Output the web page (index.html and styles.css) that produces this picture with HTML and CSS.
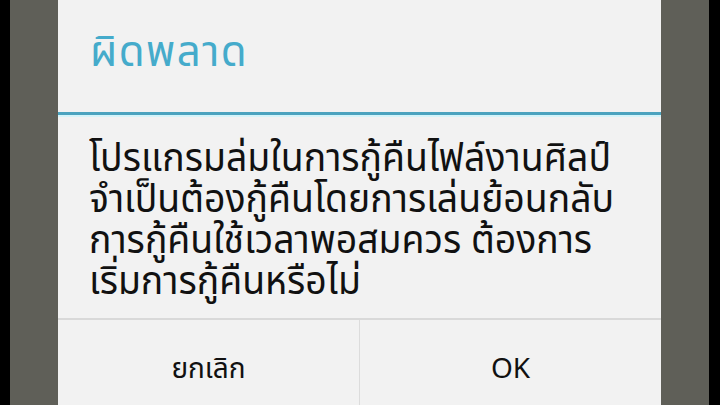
FILE: index.html
```html
<!DOCTYPE html>
<html lang="th">
<head>
<meta charset="UTF-8" />
<meta name="viewport" content="width=device-width, initial-scale=1" />
<title>ผิดพลาด</title>
<link rel="stylesheet" href="styles.css">
</head>
<body>
<div class="screen">
    <div class="shade"></div>
    <div class="dialog">
        <div class="dialog-title">ผิดพลาด</div>
        <div class="dialog-body">
            <span class="line">โปรแกรมล่มในการกู้คืนไฟล์งานศิลป์</span>
            <span class="line">จำเป็นต้องกู้คืนโดยการเล่นย้อนกลับ</span>
            <span class="line">การกู้คืนใช้เวลาพอสมควร ต้องการ</span>
            <span class="line">เริ่มการกู้คืนหรือไม่</span>
        </div>
        <div class="dialog-buttons">
            <button class="btn">ยกเลิก</button>
            <button class="btn">OK</button>
        </div>
    </div>
    <div class="shade"></div>
</div>
</body>
</html>
```

FILE: styles.css
```css
body {
    margin: 0;
    background: #000;
    font-family: "Noto Sans Thai", "Noto Sans", "DejaVu Sans", sans-serif;
    overflow: hidden;
}
.screen {
    display: flex;
    height: 405px;
    padding: 0 10px;
}
.shade {
    width: 48px;
    background: #5f5f58;
}
.dialog {
    width: 603px;
    background: #f2f2f2;
    display: flex;
    flex-direction: column;
}
.dialog-title {
    height: 115px;
    box-sizing: border-box;
    padding: 25px 0 0 32px;
    font-size: 42px;
    line-height: 56px;
    letter-spacing: 1.5px;
    color: #45abcb;
    border-bottom: 3px solid #4ba3bf;
    box-shadow: 0 2px 0 #d4f4fa;
}
.dialog-body {
    padding: 24px 0 0 31px;
    height: 205px;
    box-sizing: border-box;
    border-bottom: 2px solid #d9d9d9;
    overflow: hidden;
}
.line {
    display: block;
    white-space: nowrap;
    font-size: 40px;
    line-height: 41px;
    color: #111;
    transform: scaleX(0.935);
    transform-origin: left center;
}
.dialog-buttons {
    display: flex;
    flex: 1;
}
.btn {
    flex: 1;
    border: none;
    background: #f2f2f2;
    font-family: inherit;
    font-size: 28px;
    color: #111;
    padding: 14px 0 0;
}
.btn + .btn {
    border-left: 1px solid #dcdcdc;
}
```
